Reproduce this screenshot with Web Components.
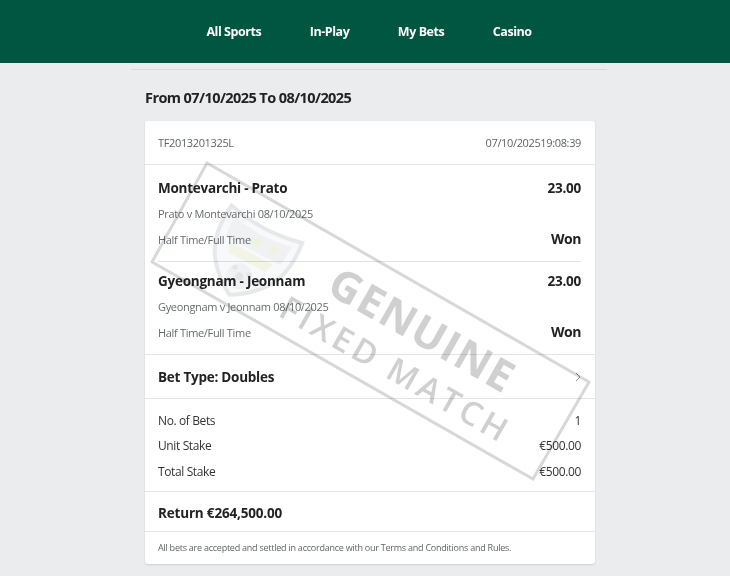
<!DOCTYPE html>
<html><head><meta charset="utf-8"><style>
html,body{margin:0;padding:0;height:576px;overflow:hidden;background:#ebecee}
body{font-family:"Open Sans","Noto Sans",sans-serif;color:#222}
</style></head><body>
<site-nav><nav-link>All Sports</nav-link><nav-link>In-Play</nav-link><nav-link>My Bets</nav-link><nav-link>Casino</nav-link></site-nav>
<page-body>
<h-title>From 07/10/2025 To 08/10/2025</h-title>
<bet-card>
<card-row><span>TF2013201325L</span><span>07/10/202519:08:39</span></card-row>
<bet-legs>
<bet-leg first sep name="Montevarchi - Prato" odds="23.00" event="Prato v Montevarchi 08/10/2025" market="Half Time/Full Time" result="Won"></bet-leg>
<bet-leg name="Gyeongnam - Jeonnam" odds="23.00" event="Gyeongnam v Jeonnam 08/10/2025" market="Half Time/Full Time" result="Won"></bet-leg>
</bet-legs>
<bet-type>Bet Type: Doubles</bet-type>
<bet-stakes>
<stake-row label="No. of Bets" value="1"></stake-row>
<stake-row label="Unit Stake" value="€500.00"></stake-row>
<stake-row label="Total Stake" value="€500.00"></stake-row>
</bet-stakes>
<bet-return>Return €264,500.00</bet-return>
<bet-note>All bets are accepted and settled in accordance with our Terms and Conditions and Rules.</bet-note>
<water-mark></water-mark>
</bet-card>
</page-body>
<script>
function def(name,html){customElements.define(name,class extends HTMLElement{
  connectedCallback(){ if(this.shadowRoot)return; const r=this.attachShadow({mode:'open'}); r.innerHTML=typeof html==='function'?html(this):html; }
});}
def('site-nav',`<style>:host{display:flex;justify-content:center;align-items:center;height:63px;background:#005640;box-sizing:border-box;padding-left:8px;gap:48.5px}</style><slot></slot>`);
def('nav-link',`<style>:host{display:block;color:#fff;font-size:12.5px;font-weight:700;line-height:17px;letter-spacing:-.45px}</style><slot></slot>`);
def('page-body',`<style>:host{display:block;width:476px;margin:6px 0 0 131px;border-top:1px solid #d9dadc;box-sizing:border-box;padding:0 12px 0 14px}</style><slot></slot>`);
def('h-title',`<style>:host{display:block;font-size:14.5px;font-weight:700;line-height:19px;color:#222;padding:18px 0 14px;letter-spacing:-.58px}</style><slot></slot>`);
def('bet-card',`<style>:host{display:block;position:relative;width:450px;background:#fff;border-radius:3px;box-shadow:0 1px 2px rgba(0,0,0,.12)}</style><slot></slot>`);
def('card-row',`<style>:host{display:flex;justify-content:space-between;align-items:center;height:43px;padding:0 14px 0 13px;border-bottom:1px solid #e3e4e6;font-size:11px;color:#5f6368;letter-spacing:-.36px}</style><slot></slot>`);
def('bet-legs',`<style>:host{display:block;border-bottom:1px solid #e3e4e6;padding:0 14px 0 13px}</style><slot></slot>`);
def('bet-leg',e=>`<style>:host{display:block;padding:${e.hasAttribute('first')?10:6}px 0 8px;${e.hasAttribute('sep')?'border-bottom:1px solid #e0e1e3;':''}}
.r{display:flex;justify-content:space-between;align-items:baseline;height:26px;line-height:26px}
.a{font-size:13.5px;font-weight:700;color:#222;letter-spacing:-.25px}
.b{font-size:11px;color:#666b70;letter-spacing:-.32px}
.c{font-size:11px;color:#666b70;letter-spacing:-.32px;line-height:24px}
.w{font-size:14px;font-weight:700;color:#222;letter-spacing:-.45px}
</style>
<div class="r a"><span>${e.getAttribute('name')}</span><span>${e.getAttribute('odds')}</span></div>
<div class="r b"><span>${e.getAttribute('event')}</span></div>
<div class="r c"><span>${e.getAttribute('market')}</span><span class="w">${e.getAttribute('result')}</span></div>`);
def('bet-type',`<style>:host{display:flex;justify-content:space-between;align-items:center;height:43px;padding:0 14px 0 13px;border-bottom:1px solid #e3e4e6;font-size:13.5px;font-weight:700;color:#222;letter-spacing:-.25px}
svg{display:block}</style><span><slot></slot></span><svg width="6" height="10" viewBox="0 0 6 10"><path d="M1 1l4 4-4 4" fill="none" stroke="#8a8d90" stroke-width="1"/></svg>`);
def('bet-stakes',`<style>:host{display:block;padding:8.6px 14px 6.4px 13px;border-bottom:1px solid #e3e4e6}</style><slot></slot>`);
def('stake-row',e=>`<style>:host{display:flex;justify-content:space-between;align-items:center;height:25.6px;font-size:12px;color:#333;letter-spacing:-.38px}</style><span>${e.getAttribute('label')}</span><span>${e.getAttribute('value')}</span>`);
def('bet-return',`<style>:host{display:flex;align-items:center;padding:3px 14px 0 13px;height:36px;border-bottom:1px solid #e3e4e6;font-size:13.5px;font-weight:700;color:#222;letter-spacing:-.18px}</style><slot></slot>`);
def('bet-note',`<style>:host{display:flex;align-items:center;height:32px;padding:0 14px 0 13px;font-size:9px;color:#5f6368;letter-spacing:-.24px}</style><slot></slot>`);
def('water-mark',`<style>:host{position:absolute;left:-145px;top:-121px;width:730px;height:576px;pointer-events:none;display:block;mix-blend-mode:multiply}
svg{position:absolute;left:0;top:0}
text{font-family:"Open Sans","Noto Sans",sans-serif;fill:#d0d0d0;text-anchor:middle;dominant-baseline:central}
</style>
<svg width="730" height="576" viewBox="0 0 730 576">
<polygon points="207,163 589,382 533,479 152,262" fill="none" stroke="#d8d8d8" stroke-width="3"/>
<text transform="translate(423 329) rotate(29.6)" font-size="43" font-weight="700" letter-spacing="1.5">GENUINE</text>
<text transform="translate(396 369) rotate(29.8)" font-size="33" font-weight="600" letter-spacing="4">FIXED MATCH</text>
<g transform="translate(250 256) rotate(28)">
<path d="M-40 -36 Q0 -26 40 -36 Q44 -2 30 18 Q18 34 0 44 Q-18 34 -30 18 Q-44 -2 -40 -36Z" fill="#f8f9fa" stroke="#e6e8ec" stroke-width="4"/>
<path d="M-33 -28 Q0 -20 33 -28 L31 -6 L-31 -6Z" fill="#eff1f3"/>
<path d="M-24 -3 L24 -3 L21 7 L-21 7Z" fill="#f4f4e6"/>
<circle cx="0" cy="23" r="13" fill="#f0f1f3"/>
<circle cx="0" cy="23" r="4" fill="#e2e4e7"/>
<circle cx="-8" cy="17" r="2.5" fill="#e2e4e7"/>
<circle cx="8" cy="17" r="2.5" fill="#e2e4e7"/>
<polygon points="0,-23 2,-18 7,-18 3,-15 4.5,-10 0,-13 -4.5,-10 -3,-15 -7,-18 -2,-18" fill="#f2f1dc"/>
<polygon points="18,-22 19.5,-18 23.5,-18 20.5,-15.5 21.5,-11.5 18,-14 14.5,-11.5 15.5,-15.5 12.5,-18 16.5,-18" fill="#f2f1dc"/>
</g>
</svg>`);
</script>
</body></html>
